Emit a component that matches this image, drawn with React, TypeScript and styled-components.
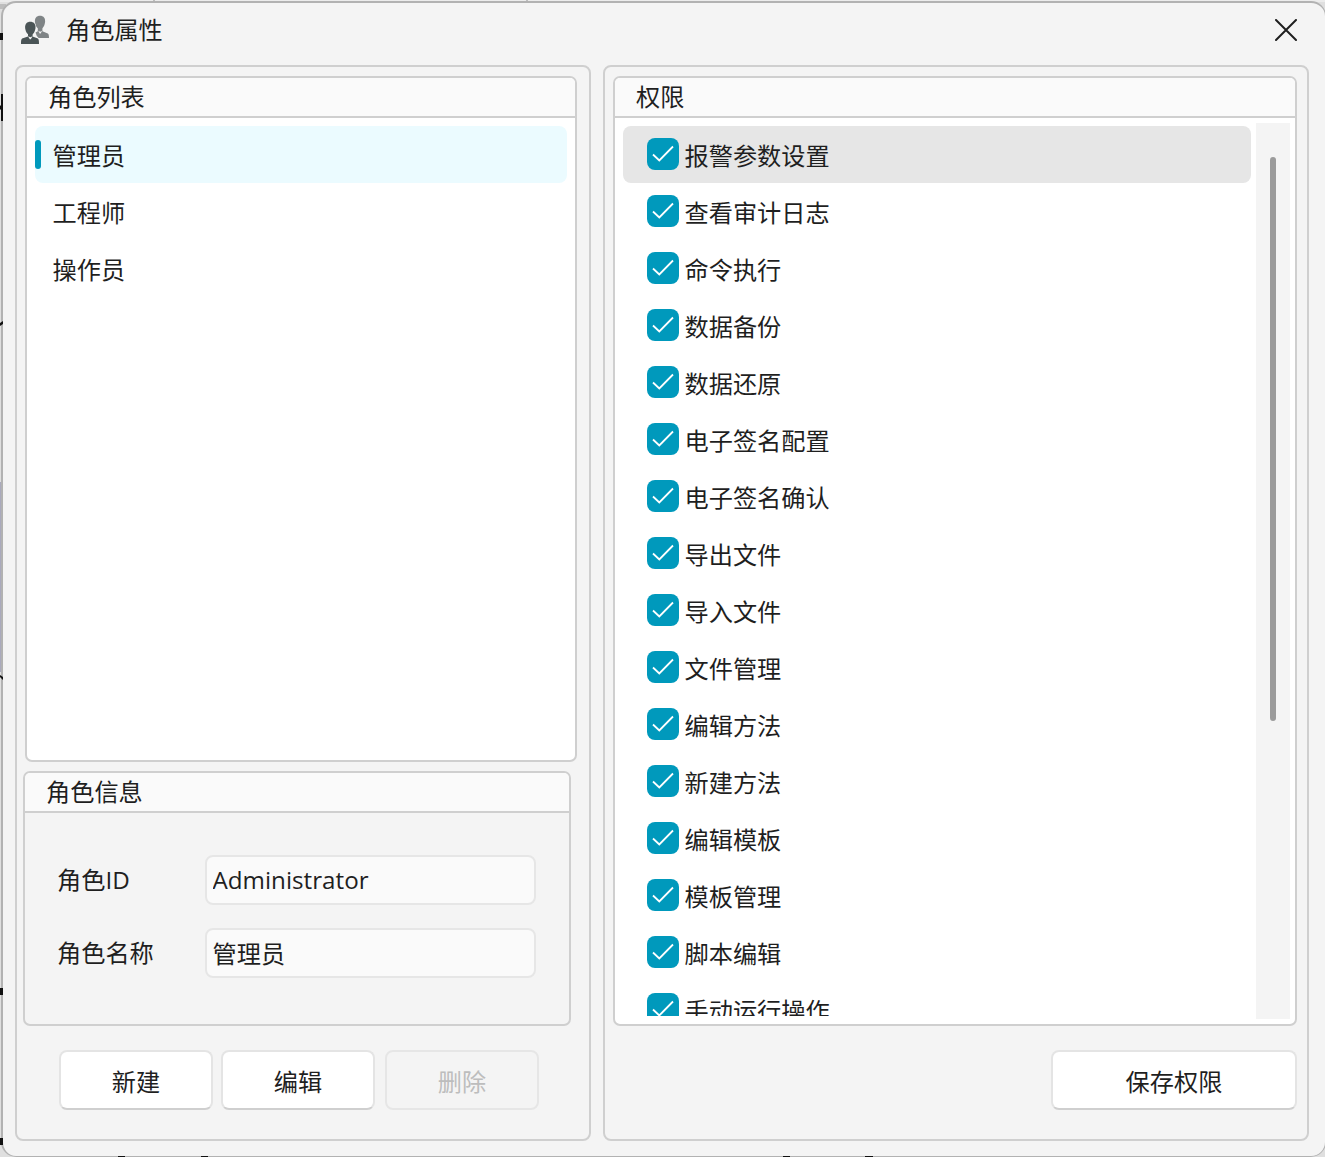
import { useState } from 'react';
import styled, { createGlobalStyle, css } from 'styled-components';

const GlobalStyle = createGlobalStyle`
  * {
    box-sizing: border-box;
  }

  body {
    margin: 0;
    overflow: hidden;
    background-color: #dfdfdf;
    color: #1f1f1f;
    font-family: 'Open Sans', 'Noto Sans CJK SC', sans-serif;
    font-size: 24.2px;
    line-height: 36px;
  }
`;

const Screen = styled.div`
  position: relative;
  width: 1325px;
  height: 1157px;
  padding: 1px 0 0 1px;
  overflow: hidden;
`;

const Backdrop = styled.svg`
  position: absolute;
  top: 0;
  left: 0;
  pointer-events: none;
`;

const Window = styled.main`
  position: relative;
  width: 1325px;
  height: 1156px;
  border: solid #b2b2b2;
  border-width: 2px 1px 1px 2px;
  border-radius: 15px;
  background-color: #f4f4f4;
`;

const TitleBar = styled.header`
  display: flex;
  align-items: center;
  height: 62px;
  padding: 0 28px 8px 17px;
`;

const Title = styled.h1`
  flex: 1;
  margin: 0 0 0 16px;
  font-size: inherit;
  font-weight: 400;
`;

const CloseButton = styled.button`
  display: flex;
  padding: 0;
  border: none;
  background: none;
`;

const Content = styled.div`
  display: flex;
  gap: 12px;
  padding-left: 12px;
`;

const Panel = styled.section<{ $width: number }>`
  width: ${({ $width }) => $width}px;
  height: 1076px;
  padding: 9px 10px 0 8px;
  border: 2px solid #cfcfcf;
  border-radius: 8px;
`;

const Group = styled.div<{ $height: number; $filled?: boolean }>`
  height: ${({ $height }) => $height}px;
  border: 2px solid #cfcfcf;
  border-radius: 7px;
  background-color: ${({ $filled }) => ($filled ? '#ffffff' : 'transparent')};
  overflow: hidden;
`;

const RoleListGroup = styled(Group)`
  margin-right: 2px;
`;

const RoleInfoGroup = styled(Group)`
  margin: 9px 8px 0 -2px;
`;

const GroupTitle = styled.h2`
  height: 40px;
  margin: 0;
  padding: 1px 0 0 21px;
  border-bottom: 2px solid #cfcfcf;
  background-color: #fafafa;
  font-size: inherit;
  font-weight: 400;
`;

const RoleList = styled.ul`
  margin: 0;
  padding: 8px 8px 0;
  list-style: none;
`;

const RoleItem = styled.li<{ $selected: boolean }>`
  display: flex;
  align-items: center;
  height: 57px;
  border-radius: 8px;
  background-color: ${({ $selected }) => ($selected ? '#ebfbff' : 'transparent')};

  &::before {
    content: '';
    width: 6px;
    height: 29px;
    margin-right: 11.500px;
    border-radius: 3px;
    background-color: ${({ $selected }) => ($selected ? '#0099bc' : 'transparent')};
  }
`;

const ItemText = styled.span`
  padding-top: 3px;
`;

const Form = styled.div`
  display: flex;
  flex-direction: column;
  gap: 23px;
  padding: 42px 33px 0 32px;
`;

const Field = styled.label`
  display: flex;
  align-items: center;
  height: 50px;
`;

const FieldLabel = styled.span`
  width: 148px;
`;

const FieldInput = styled.input`
  width: 331px;
  height: 50px;
  padding: 0 6px 2px 5.500px;
  border: 2px solid #e6e6e6;
  border-radius: 8px;
  outline: none;
  background-color: #fafafa;
  color: #1f1f1f;
  font: inherit;
`;

const Actions = styled.div<{ $right?: boolean }>`
  display: flex;
  gap: 8px;
  margin-top: 24px;
  padding-left: 34px;
  justify-content: ${({ $right }) => ($right ? 'flex-end' : 'flex-start')};
`;

const Button = styled.button<{ $width?: number }>`
  width: ${({ $width = 154 }) => $width}px;
  height: 60px;
  padding: 3px 0 0;
  border: 2px solid #e4e4e4;
  border-bottom-color: #cfcfcf;
  border-radius: 8px;
  background-color: #ffffff;
  color: #1f1f1f;
  font: inherit;

  ${({ disabled }) =>
    disabled &&
    css`
      margin-left: 2px;
      border-color: #e6e6e6;
      background-color: #f4f4f4;
      color: #bdbdbd;
    `}
`;

const PermissionBody = styled.div`
  display: flex;
  gap: 5px;
  height: 906px;
  padding: 5px 5px 5px 8px;
`;

const PermissionList = styled.ul`
  width: 628px;
  height: 893px;
  margin: 0;
  padding: 3px 0 0;
  list-style: none;
  overflow: hidden;
`;

const PermissionItem = styled.li<{ $current: boolean }>`
  display: flex;
  align-items: center;
  gap: 5.500px;
  height: 57px;
  padding-left: 24px;
  border-radius: 8px;
  background-color: ${({ $current }) => ($current ? '#e6e6e6' : 'transparent')};
`;

const CheckBox = styled.span<{ $checked: boolean }>`
  display: flex;
  width: 32px;
  height: 32px;
  margin-bottom: 1px;
  border-radius: 8px;
  background-color: ${({ $checked }) => ($checked ? '#0099bc' : '#e6e6e6')};
`;

const ScrollTrack = styled.div`
  width: 34px;
  height: 896px;
  padding: 34px 0 0 14px;
  background-color: #f4f4f4;
`;

const ScrollThumb = styled.div`
  width: 6px;
  height: 564px;
  border-radius: 3px;
  background-color: #9b9b9b;
`;

const roles = [
  { id: 'Administrator', name: '管理员' },
  { id: 'Engineer', name: '工程师' },
  { id: 'Operator', name: '操作员' },
];

const permissions = [
  '报警参数设置',
  '查看审计日志',
  '命令执行',
  '数据备份',
  '数据还原',
  '电子签名配置',
  '电子签名确认',
  '导出文件',
  '导入文件',
  '文件管理',
  '编辑方法',
  '新建方法',
  '编辑模板',
  '模板管理',
  '脚本编辑',
  '手动运行操作',
];

const UsersIcon = () => (
  <svg width="30" height="30" viewBox="0 0 30 30">
    <g fill="#7f8486">
      <path d="M20 .8c3.300 0 5.100 2.200 5.100 5.200 0 3.700-2 8-5.100 8s-5.100-4.300-5.100-8C14.900 3 16.700.8 20 .8z" />
      <path d="M15.500 17.500l2.300-1.300V12h4.600v4.200l5.400 2.300c.9.600 1.200 2 1.200 4.500H17.500z" />
    </g>
    <path d="M18.300 15.800l1.900 1 1.900-1-1.400 2.700h-1z" fill="#f4f4f4" />
    <path
      d="M10.300 6.300c3.700 0 5.700 2.400 5.700 5.800 0 3-1.200 6-2.900 7.700l5 2.200 1.400 7H3V6z"
      fill="#f4f4f4"
    />
    <g fill="#4a5456">
      <path d="M10.300 6.800c3.400 0 5.200 2.200 5.200 5.300 0 3.700-2 8.100-5.200 8.100s-5.200-4.400-5.200-8.100c0-3.100 1.800-5.300 5.200-5.300z" />
      <path d="M8 18h4.600v3.500l5.300 2.100c.9.700 1.100 2.300 1.100 5.400H1c0-3.100.2-4.700 1.100-5.400L8 21.500z" />
    </g>
    <path d="M8 21.200l2.300 1.100 2.300-1.100-1.800 3h-1z" fill="#f4f4f4" />
  </svg>
);

const CloseIcon = () => (
  <svg width="22" height="22" viewBox="0 0 22 22">
    <path d="M1 1l20 20M21 1L1 21" stroke="#1f1f1f" strokeWidth="2" strokeLinecap="round" />
  </svg>
);

const CheckIcon = () => (
  <svg width="32" height="32" viewBox="0 0 32 32" fill="none">
    <path d="M6 16.500l6.300 6L26 8.500" stroke="#ffffff" strokeWidth="1.800" />
  </svg>
);

export const App = () => {
  const [selectedRole, setSelectedRole] = useState(0);
  const [current, setCurrent] = useState(0);
  const [granted, setGranted] = useState<string[]>(permissions);

  const toggle = (name: string, index: number) => {
    setCurrent(index);
    setGranted((prev) =>
      prev.includes(name) ? prev.filter((item) => item !== name) : [...prev, name]
    );
  };

  return (
    <Screen>
      <GlobalStyle />
      <Backdrop width="1325" height="1157">
        <rect width="1325" height="2" fill="#ececec" />
        <path d="M0 4h6v5H0zM153 0h2v2h-2zM526 0h2v2h-2z" fill="#bdbdbd" />
        <rect y="482" width="3" height="190" fill="#aaaabd" />
      </Backdrop>
      <Window>
        <TitleBar>
          <UsersIcon />
          <Title>角色属性</Title>
          <CloseButton aria-label="关闭">
            <CloseIcon />
          </CloseButton>
        </TitleBar>

        <Content>
          <Panel $width={576}>
            <RoleListGroup $height={686} $filled>
              <GroupTitle>角色列表</GroupTitle>
              <RoleList>
                {roles.map((role, index) => (
                  <RoleItem
                    key={role.id}
                    $selected={index === selectedRole}
                    onClick={() => setSelectedRole(index)}
                  >
                    <ItemText>{role.name}</ItemText>
                  </RoleItem>
                ))}
              </RoleList>
            </RoleListGroup>

            <RoleInfoGroup $height={255}>
              <GroupTitle>角色信息</GroupTitle>
              <Form>
                <Field>
                  <FieldLabel>角色ID</FieldLabel>
                  <FieldInput readOnly value={roles[selectedRole].id} />
                </Field>
                <Field>
                  <FieldLabel>角色名称</FieldLabel>
                  <FieldInput readOnly value={roles[selectedRole].name} />
                </Field>
              </Form>
            </RoleInfoGroup>

            <Actions>
              <Button>新建</Button>
              <Button>编辑</Button>
              <Button disabled>删除</Button>
            </Actions>
          </Panel>

          <Panel $width={706}>
            <Group $height={950} $filled>
              <GroupTitle>权限</GroupTitle>
              <PermissionBody>
                <PermissionList>
                  {permissions.map((name, index) => (
                    <PermissionItem
                      key={name}
                      $current={index === current}
                      onClick={() => toggle(name, index)}
                    >
                      <CheckBox $checked={granted.includes(name)}>
                        {granted.includes(name) && <CheckIcon />}
                      </CheckBox>
                      <ItemText>{name}</ItemText>
                    </PermissionItem>
                  ))}
                </PermissionList>
                <ScrollTrack>
                  <ScrollThumb />
                </ScrollTrack>
              </PermissionBody>
            </Group>

            <Actions $right>
              <Button $width={246}>保存权限</Button>
            </Actions>
          </Panel>
        </Content>
      </Window>
      <Backdrop width="1325" height="1157">
        <path
          d="M0 33h3v7H0zM0 106l2-2v4l-2 2zM1 94h2v27H1zM0 323l3-2v3l-3 2zM0 675l3 2v3l-3-3zM0 988h3v7H0zM0 1138h3v7H0zM118 1156h7v1h-7zM201 1156h7v1h-7zM783 1156h7v1h-7zM865 1156h8v1h-8z"
          fill="#111111"
        />
      </Backdrop>
    </Screen>
  );
};

export default App;
